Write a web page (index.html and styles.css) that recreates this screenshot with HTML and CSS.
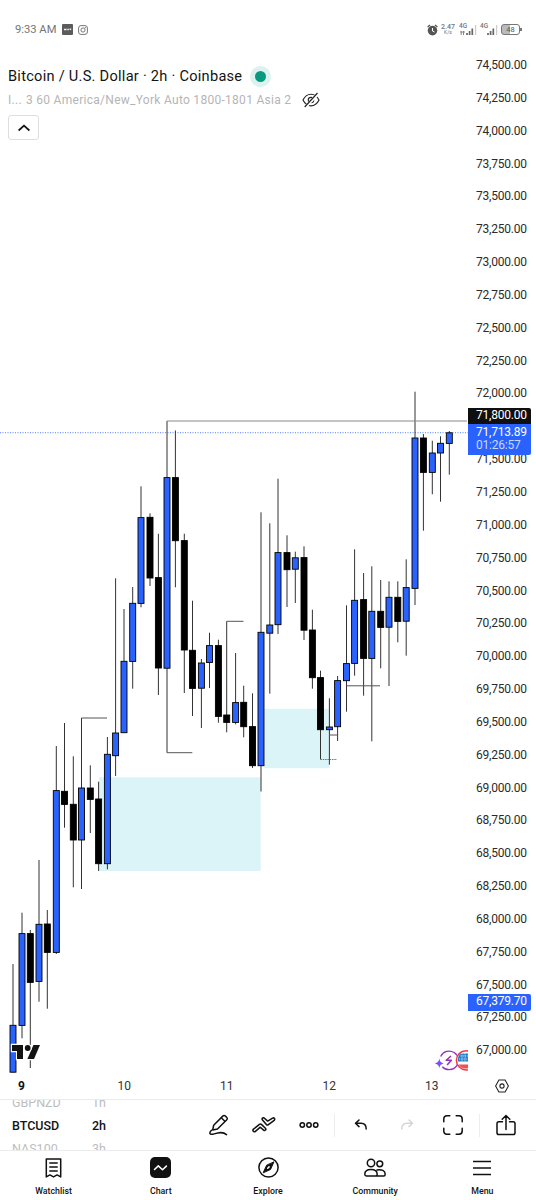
FILE: index.html
```
<!DOCTYPE html>
<html lang="en">
<head>
    <meta charset="UTF-8">
    <meta name="viewport" content="width=device-width, initial-scale=1.0">
    <title>BTCUSD 2h Chart</title>
    <link rel="stylesheet" href="styles.css">
</head>
<body>
    <header class="status-bar">
        <div class="status-left">
            <span class="clock">9:33 AM</span>
            <svg class="app-icon" width="11" height="11" viewBox="0 0 11 11"><rect width="11" height="11" rx="1" fill="#5c5c5c"/><path d="M2 5.5h2.6M5.3 5.5h1.6M7.6 5.3h1.6" stroke="#eee" stroke-width="1.4"/></svg>
            <svg width="10" height="10" viewBox="0 0 10 10" fill="none" stroke="#777"><rect x=".6" y=".6" width="8.8" height="8.8" rx="2.4"/><circle cx="5" cy="5" r="2.1"/><circle cx="7.4" cy="2.6" r=".3"/></svg>
        </div>
        <div class="status-right">
            <svg class="alarm" width="11" height="12" viewBox="0 0 11 12"><circle cx="5.5" cy="6.6" r="4.8" fill="#555"/><path d="M.6 3 3 1M10.4 3 8 1" stroke="#555" stroke-width="1.3"/><path d="M5.5 4v3l2 1" fill="none" stroke="#fff"/></svg>
            <div class="speed"><b>2.47</b><i>K/s</i></div>
            <div class="signal">
                <span>4G</span>
                <svg width="18" height="11" viewBox="0 0 18 11"><path d="M2.2 7v4M4.5 7v4M1 8h5" stroke="#888" stroke-width="1"/><path d="M8 9v2M10.6 7v4M13.3 4.5V11" stroke="#666" stroke-width="1.7"/><path d="M16.6 1v10" stroke="#ccc" stroke-width="1.3"/></svg>
            </div>
            <div class="signal">
                <span>4G</span>
                <svg width="18" height="11" viewBox="0 0 18 11"><path d="M8 9v2M10.6 7v4M13.3 4.5V11" stroke="#666" stroke-width="1.7"/><path d="M16.6 1v10" stroke="#ccc" stroke-width="1.3"/></svg>
            </div>
            <div class="battery">48</div>
        </div>
    </header>

    <main class="chart-area">
        <div class="plot">
            <svg id="chart" width="468" height="1024" viewBox="0 49 468 1024">
                <!-- demand zones -->
                <rect x="99" y="777.3" width="161.6" height="93.7" fill="#daf4f7"/>
                <rect x="264.4" y="708.8" width="65" height="59.4" fill="#daf4f7"/>
                <path d="M0 432.7H468" stroke="#2962ff" stroke-width=".8" stroke-dasharray="1 1.5"/>
                <!-- candles are added by the script -->
                <g id="candles"></g>
                <!-- liquidity levels -->
                <g fill="none" stroke="#555" stroke-width="1">
                    <path d="M167 421H467" stroke="#888"/>
                    <path d="M81.5 718H107"/>
                    <path d="M167 752.7H192.3"/>
                    <path d="M226.7 621.3H243.5"/>
                    <path d="M329.4 735H337.6"/>
                    <path d="M346.5 685.8H380"/>
                    <path d="M320.5 759.5H337" stroke-dasharray="1.5 .8" stroke-width=".8"/>
                </g>
                <!-- logo -->
                <g fill="#131313" stroke="#fff" stroke-width="2.4" paint-order="stroke">
                    <path d="M12 1045h11v14h-6v-8h-5z"/>
                    <path d="M33.4 1045h6.600l-6 14h-6.600z"/>
                    <circle cx="27.700" cy="1048" r="2.900"/>
                </g>
                <!-- event badges -->
                <path d="M439.3 1058.5c.7 3.300 1.300 4 4.500 4.900-3.200.9-3.800 1.600-4.500 4.900-.7-3.300-1.300-4-4.500-4.900 3.200-.9 3.800-1.600 4.500-4.900z" fill="#7c4dff"/>
                <path d="M440.700 1056.500a9.300 9.300 0 1 1 1.600 10.200" fill="none" stroke="#9530b8" stroke-width="1.300"/>
                <path d="M451 1056l-4.800 4.200h5.200l-4.300 4.800" fill="none" stroke="#9530b8" stroke-width="1.5" stroke-linejoin="round"/>
                <circle cx="466" cy="1060.300" r="9.600" fill="#fff" stroke="#f23645" stroke-width="1.500"/>
                <path d="M460 1053.500h8v8h-10v-4z" fill="#2381c9"/>
                <path d="M460.500 1056h8M459 1059h9M462 1053v8M465 1053v8" stroke="#fff" stroke-width=".7" stroke-dasharray="1.200 1"/>
                <path d="M458.500 1064.500h10v3.800c-5 1-8-.5-10-3.800z" fill="#f0524f"/>
            </svg>
            <div class="legend">
                <div class="symbol-row">
                    <h1>Bitcoin / U.S. Dollar · 2h · Coinbase</h1>
                    <span class="market-dot"></span>
                </div>
                <div class="indicator-row">
                    <span class="short">I...</span>
                    <span class="params">3 60 America/New_York Auto 1800-1801 Asia 2</span>
                    <svg width="18" height="16" viewBox="0 0 18 16" fill="none" stroke="#222" stroke-width="1.150"><path d="M1 8c2-4 4.700-5.800 8-5.800S15 4 17 8c-2 4-4.700 5.800-8 5.800S3 12 1 8z"/><circle cx="9" cy="8" r="2.700"/><path d="M3.200 15.500 16 1.500" stroke="#fff" stroke-width="3"/><path d="M2.700 15 15.500 1"/></svg>
                </div>
                <button class="collapse"><svg width="14" height="8" viewBox="0 0 14 8" fill="none" stroke="#111" stroke-width="1.700"><path d="M1.600 6.500 7 1.700l5.400 4.800"/></svg></button>
            </div>
        </div>
        <aside class="price-scale">
            <span>74,500.00</span>
            <span>74,250.00</span>
            <span>74,000.00</span>
            <span>73,750.00</span>
            <span>73,500.00</span>
            <span>73,250.00</span>
            <span>73,000.00</span>
            <span>72,750.00</span>
            <span>72,500.00</span>
            <span>72,250.00</span>
            <span>72,000.00</span>
            <span></span>
            <span>71,500.00</span>
            <span>71,250.00</span>
            <span>71,000.00</span>
            <span>70,750.00</span>
            <span>70,500.00</span>
            <span>70,250.00</span>
            <span>70,000.00</span>
            <span>69,750.00</span>
            <span>69,500.00</span>
            <span>69,250.00</span>
            <span>69,000.00</span>
            <span>68,750.00</span>
            <span>68,500.00</span>
            <span>68,250.00</span>
            <span>68,000.00</span>
            <span>67,750.00</span>
            <span>67,500.00</span>
            <span>67,250.00</span>
            <span>67,000.00</span>
            <div class="tag tag-level">71,800.00</div>
            <div class="tag tag-last">71,713.89<small>01:26:57</small></div>
            <div class="tag tag-low">67,379.70</div>
        </aside>
    </main>

    <div class="time-scale">
        <b>9</b><span>10</span><span>11</span><span>12</span><span>13</span>
        <svg width="14" height="14" viewBox="0 0 14 14" fill="none" stroke="#222" stroke-width="1.100"><path d="M3.900 1h6.200L13.400 7l-3.300 6H3.900L.6 7z"/><circle cx="7" cy="7" r="2.100"/></svg>
    </div>

    <div class="toolbar">
        <div class="picker symbols"><span>GBPNZD</span><b>BTCUSD</b><span>NAS100</span></div>
        <div class="picker intervals"><span>1h</span><b>2h</b><span>3h</span></div>
        <div class="tools">
            <svg width="20" height="22" viewBox="0 0 20 22"><path d="M4.700 11.200 14 1.900a1.500 1.500 0 0 1 2.200 0l1.600 1.600a1.500 1.500 0 0 1 0 2.200L8.500 15l-4.800.9zM12.300 3.700l3.800 3.800"/><path d="M2.500 16.300C-.2 18.800.5 20.800 3.900 20.200c4.600-1.300 9.600-3.200 13.600.4"/></svg>
            <svg width="24" height="16" viewBox="0 0 24 16"><path d="M1.500 12.100 7.400 7.400q1-.8 2 0l4 3.800a1.300 1.300 0 0 1-1.800 1.900L8.300 10.200l-4.900 4.100a1.300 1.300 0 0 1-1.900-2.200z"/><path d="M10.500 3a1.300 1.300 0 0 1 1.900-1.800l3.300 2.900 4.900-2.900a1.300 1.300 0 0 1 1.600 2.100l-5.800 4.300q-1 .8-2 0z"/></svg>
            <svg width="20" height="8" viewBox="0 0 20 8"><circle cx="3.300" cy="4" r="2.200"/><circle cx="10" cy="4" r="2.200"/><circle cx="16.700" cy="4" r="2.200"/></svg>
            <i class="divider"></i>
            <svg width="14" height="12" viewBox="0 0 14 12"><path d="M5 1 1.500 4.300 5 7.600M1.700 4.300H7c3.600 0 5.200 1.800 5.200 5.700"/></svg>
            <svg class="disabled" width="14" height="12" viewBox="0 0 14 12"><path d="m9 1 3.500 3.300L9 7.600M12.300 4.300H7c-3.600 0-5.200 1.800-5.200 5.700"/></svg>
            <svg width="20" height="20" viewBox="0 0 20 20"><path d="M.8 6.800V4Q.8.8 4 .8h2.800M13.200.8H16q3.200 0 3.200 3.200v2.800M19.200 13.200V16q0 3.200-3.200 3.200h-2.800M6.800 19.200H4Q.8 19.200.8 16v-2.800"/></svg>
            <i class="divider"></i>
            <svg width="20" height="22" viewBox="0 0 20 22"><path d="M6.500 7.800H2.800Q1 7.800 1 9.600v9.200q0 1.800 1.800 1.800h14.400q1.800 0 1.800-1.800V9.600q0-1.800-1.800-1.800h-3.700M10 15.500V1.500M6.200 5.300 10 1.500l3.800 3.800"/></svg>
        </div>
    </div>

    <nav>
        <a href="#"><svg width="17" height="20" viewBox="0 0 17 20"><path d="M1.300.9h14.400v18l-3.600-2-3.600 2-3.600-2-3.600 2z"/><path d="M4.800 5h7.400M4.800 9h7.400M4.800 13h7.400"/></svg>Watchlist</a>
        <a href="#"><svg width="21" height="21" viewBox="0 0 21 21"><rect width="21" height="21" rx="5" fill="#111" stroke="none"/><path d="m4.500 12.500 3.800-3.600 4.200 3.900 3.900-3.700" stroke="#fff"/></svg>Chart</a>
        <a href="#"><svg width="21" height="21" viewBox="0 0 21 21"><circle cx="10.500" cy="10.500" r="9.600"/><path d="M15.800 5.200 12.500 12.500 5.200 15.800 8.500 8.500z" fill="#111" stroke-width="1"/><path d="m9.700 11.300 1.400-1.400" stroke="#fff"/></svg>Explore</a>
        <a href="#"><svg width="22" height="19" viewBox="0 0 22 19"><circle cx="7" cy="5" r="3.700"/><circle cx="15.800" cy="5.800" r="2.900"/><path d="M2.400 18Q.8 18 .8 16.300C.8 12.800 3.500 11.500 7 11.500s6.200 1.300 6.200 4.800q0 1.700-1.600 1.700zM13 11.900c4.600-.9 8.200.8 8.200 4.300q0 1.800-1.600 1.800h-7"/></svg>Community</a>
        <a href="#"><svg width="18" height="16" viewBox="0 0 18 16"><path d="M0 1.500h18M0 8h18M0 14.500h18" stroke-width="1.600"/></svg>Menu</a>
    </nav>

    <script>
        // x, high, body top, body bottom, low, direction (1 up, 0 down)
        const candles = [
            [13, 964, 1025, 1072.5, 1072.5, 1],
            [22, 912.7, 933.3, 1025.7, 1038.3, 1],
            [30.3, 930, 933.3, 982.7, 1068, 0],
            [39, 860, 924, 981.7, 1001.7, 1],
            [47.3, 910, 923.7, 952.7, 1008.7, 0],
            [56.3, 746, 790.3, 952.7, 954, 1],
            [64.5, 723, 791, 804.7, 827.7, 0],
            [73.3, 756.3, 804, 840.3, 887.3, 0],
            [81.5, 718, 787.7, 840.3, 889, 1],
            [90.3, 765.3, 787.7, 799.7, 833, 0],
            [98.6, 781.7, 798.7, 864, 871, 0],
            [107.4, 737, 754, 864, 869.3, 1],
            [115.6, 578.3, 732.7, 756, 776, 1],
            [124, 609, 661, 733, 733, 1],
            [132.7, 587, 603, 661.7, 688.7, 1],
            [141, 486.3, 517.3, 603.7, 607.3, 1],
            [150, 513.3, 517, 578.3, 586, 0],
            [158.4, 533.7, 577.3, 668.3, 695, 0],
            [167, 421, 477.3, 668.5, 752.7, 1],
            [175.4, 430.5, 477.3, 541, 587.3, 0],
            [184.3, 533.7, 540.3, 650.3, 693, 0],
            [192.5, 600.7, 650, 688.7, 716, 0],
            [201.4, 659, 662.7, 688.5, 728, 1],
            [209.5, 632.7, 645.3, 662.8, 688, 1],
            [218.4, 639.7, 645.3, 716.7, 722.7, 0],
            [226.7, 621.3, 714.7, 722.7, 732.3, 0],
            [235.6, 653, 702.3, 722.7, 724.3, 1],
            [243.7, 685.7, 702, 727, 737.3, 0],
            [252.5, 693.3, 726.3, 766, 768, 0],
            [261, 512.3, 632, 766, 791.5, 1],
            [269.8, 523.3, 624.7, 633.5, 693.7, 1],
            [278, 478.7, 552.3, 625, 634, 1],
            [287, 535.3, 552.3, 570, 607, 0],
            [295.3, 551.7, 557.5, 569.5, 603, 1],
            [304, 546.3, 557.3, 630.5, 640, 0],
            [312.4, 609.7, 629.7, 678, 688.7, 0],
            [320.5, 670.7, 677.3, 730, 759.3, 0],
            [329.4, 698.3, 726.7, 730, 764.7, 1],
            [337.6, 676, 680.3, 727, 741, 1],
            [346.5, 605.3, 663.3, 681, 711.7, 1],
            [354.6, 549.3, 600, 663.7, 675.7, 1],
            [363.6, 573, 599.3, 658.7, 695.7, 0],
            [371.8, 566.3, 611, 658.7, 741.3, 1],
            [380.7, 580, 611, 627.7, 668.3, 0],
            [389, 581.3, 597, 627.5, 686, 1],
            [397.8, 581.3, 597, 621.7, 642.3, 0],
            [406.2, 559.3, 587.3, 621.5, 655.7, 1],
            [415, 391.7, 437.7, 588.7, 605, 1],
            [423.4, 434, 437.7, 472.7, 530.7, 0],
            [432.3, 440.7, 452.7, 472.7, 494.3, 1],
            [440.5, 436.3, 443, 453.3, 501.7, 1],
            [449.3, 431, 432.5, 443.7, 474.7, 1]
        ];

        function drawCandles() {
            let shapes = '';
            candles.forEach(([x, high, top, bottom, low, up]) => {
                const fill = up ? '#2962ff' : '#000';
                shapes += `<path d="M${x} ${high}V${low}" stroke="#333"/>`;
                shapes += `<rect x="${x - 3}" y="${top + 0.3}" width="6" height="${bottom - top - 0.6}" fill="${fill}" stroke="#000" stroke-width=".9"/>`;
            });
            document.getElementById('candles').innerHTML = shapes;
        }

        drawCandles();
    </script>
</body>
</html>
```
FILE: styles.css
```
* {
    margin: 0;
    padding: 0;
    box-sizing: border-box;
}

body {
    width: 536px;
    height: 1200px;
    background: #fff;
    color: #131313;
    font-family: Roboto, Arial, sans-serif;
    display: flex;
    flex-direction: column;
    overflow: hidden;
}

svg {
    display: block;
    flex-shrink: 0;
}

/* Phone status bar */
.status-bar {
    height: 49px;
    padding: 10px 14px 0 15px;
    display: flex;
    justify-content: space-between;
    align-items: center;
    color: #757575;
}

.status-left, .status-right {
    display: flex;
    align-items: center;
}

.clock {
    font-size: 11.2px;
    margin-right: 6px;
}

.app-icon {
    margin-right: 5px;
}

.alarm {
    margin-right: 3px;
}

.speed {
    width: 14px;
    margin-right: 4px;
    display: flex;
    flex-direction: column;
    align-items: center;
    font-size: 7px;
    line-height: 6px;
}

.speed b {
    font-weight: 500;
}

.speed i {
    font-size: 5px;
    line-height: 5px;
    font-style: normal;
}

.signal {
    width: 18px;
    margin-right: 3px;
    position: relative;
}

.signal span {
    position: absolute;
    left: 0;
    top: -1px;
    font-size: 6.5px;
    line-height: 7px;
    font-weight: 500;
}

.battery {
    width: 19px;
    height: 11px;
    margin-right: 2px;
    border: 1px solid #777;
    border-radius: 3px;
    background: linear-gradient(90deg, #bbb 45%, #fff 45%);
    color: #555;
    font-size: 7.5px;
    line-height: 9px;
    text-align: center;
    position: relative;
}

.battery::after {
    content: '';
    position: absolute;
    right: -3px;
    top: 3px;
    width: 2px;
    height: 3px;
    background: #777;
}

/* Chart */
.chart-area {
    height: 1024px;
    display: flex;
}

.plot {
    width: 468px;
    position: relative;
}

.legend {
    position: absolute;
    left: 8px;
    top: 16px;
}

.symbol-row {
    height: 22px;
    display: flex;
    align-items: center;
}

h1 {
    font-size: 14.6px;
    font-weight: 400;
    line-height: 20px;
    white-space: nowrap;
    letter-spacing: 0.26px;
    padding-bottom: 1px;
}

.market-dot {
    width: 21px;
    height: 21px;
    margin-left: 8px;
    border: 5.5px solid #dcf2ee;
    border-radius: 50%;
    background: #089981;
}

.indicator-row {
    height: 26px;
    display: flex;
    align-items: center;
    color: #b5b5b5;
    font-size: 12px;
    letter-spacing: 0.28px;
    white-space: nowrap;
}

.short {
    width: 18px;
}

.params {
    margin-right: 11px;
}

.collapse {
    width: 31px;
    height: 25px;
    margin-top: 2px;
    border: 1px solid #dedede;
    border-radius: 3px;
    background: #fff;
    display: flex;
    align-items: center;
    justify-content: center;
}

/* Price scale */
.price-scale {
    width: 68px;
    position: relative;
    font-size: 12px;
    letter-spacing: -0.22px;
    color: #2b2b2b;
}

.price-scale span {
    display: block;
    height: 32.85px;
    padding-left: 8px;
    line-height: 32.85px;
}

.tag {
    position: absolute;
    left: 0;
    width: 63px;
    padding-left: 8px;
    border-radius: 0 2px 2px 0;
    color: #fff;
    background: #2962ff;
    line-height: 15px;
}

.tag-level {
    top: 359px;
    height: 16px;
    background: #0f0f0f;
    border-radius: 0 2px 0 0;
}

.tag-last {
    top: 375px;
    height: 31px;
    padding-top: 1px;
    line-height: 14px;
    border-radius: 0 0 2px 0;
}

.tag-last small {
    display: block;
    font-size: 12px;
    line-height: 13px;
    color: #cbd8ff;
}

.tag-low {
    top: 945px;
    height: 17px;
}

/* Time scale, one column per day */
.time-scale {
    height: 27px;
    border-bottom: 1px solid #ebebeb;
    display: grid;
    grid-template-columns: 73px 102.5px 102.5px 102.5px 102.5px 38px;
    align-items: center;
    justify-items: center;
    font-size: 12px;
    color: #333;
}

.time-scale b {
    margin-right: 30px;
    color: #111;
}

/* Toolbar */
.toolbar {
    height: 51px;
    border-bottom: 1px solid #ebebeb;
    display: flex;
    overflow: hidden;
}

.picker {
    display: flex;
    flex-direction: column;
    justify-content: center;
    font-size: 12.5px;
    line-height: 23px;
    color: #bdbdbd;
}

.picker b {
    color: #131313;
    font-weight: 500;
}

.symbols {
    width: 92px;
    padding-left: 12px;
}

.intervals {
    width: 104px;
}

.tools {
    display: grid;
    grid-template-columns: 45px 45px 45px 7px 46px 46px 45px 8px 45px;
    align-items: center;
    justify-items: center;
}

.tools svg, nav svg {
    fill: none;
    stroke: #111;
    stroke-width: 1.5;
    stroke-linecap: round;
    stroke-linejoin: round;
}

.tools .divider {
    width: 1px;
    height: 23px;
    background: #ededed;
}

.tools svg.disabled {
    stroke: #d6d6d6;
}

/* Bottom navigation */
nav {
    height: 49px;
    display: flex;
}

nav a {
    flex: 1;
    height: 49px;
    display: grid;
    grid-template-rows: 21px 11px;
    align-content: space-between;
    align-items: center;
    justify-items: center;
    padding: 6px 0 3px;
    color: #131313;
    font-size: 8.8px;
    line-height: 11px;
    font-weight: 500;
    text-decoration: none;
}
```
